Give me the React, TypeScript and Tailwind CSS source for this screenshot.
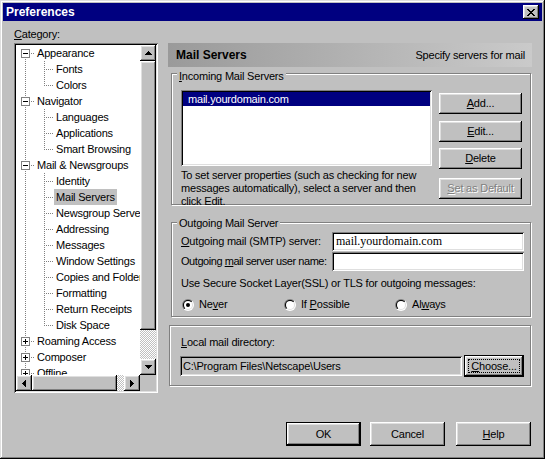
import React from "react";

const FONT = "font-['Liberation_Sans',Arial,sans-serif]";
const raised =
  "shadow-[inset_-1px_-1px_#000,inset_1px_1px_#fff,inset_-2px_-2px_#808080,inset_2px_2px_#dfdfdf]";
const sunken =
  "shadow-[inset_1px_1px_#808080,inset_-1px_-1px_#fff,inset_2px_2px_#000,inset_-2px_-2px_#dfdfdf]";
const frame =
  "shadow-[inset_-1px_-1px_#000,inset_1px_1px_#dfdfdf,inset_-2px_-2px_#808080,inset_2px_2px_#fff]";
const etched = "border border-[#808080] shadow-[inset_1px_1px_#fff,1px_1px_#fff]";
const checker =
  "bg-[image:repeating-conic-gradient(#c0c0c0_0_25%,#fff_0_50%)] bg-[length:2px_2px]";

function U({ children }: { children: React.ReactNode }) {
  return <u className="underline decoration-1 underline-offset-1">{children}</u>;
}

function Arrow({ dir }: { dir: "up" | "down" | "left" | "right" }) {
  const rows = [1, 3, 5, 7];
  if (dir === "up" || dir === "down") {
    return (
      <svg width="7" height="4" viewBox="0 0 7 4" shapeRendering="crispEdges">
        {rows.map((w, i) => (
          <rect key={i} x={(7 - w) / 2} y={dir === "up" ? i : 3 - i} width={w} height={1} fill="#000" />
        ))}
      </svg>
    );
  }
  return (
    <svg width="4" height="7" viewBox="0 0 4 7" shapeRendering="crispEdges">
      {rows.map((h, i) => (
        <rect key={i} y={(7 - h) / 2} x={dir === "left" ? i : 3 - i} height={h} width={1} fill="#000" />
      ))}
    </svg>
  );
}

function ScrollBtn({ dir }: { dir: "up" | "down" | "left" | "right" }) {
  return (
    <div className={`w-[16px] h-[16px] shrink-0 bg-[#c0c0c0] ${raised} flex items-center justify-center`}>
      <Arrow dir={dir} />
    </div>
  );
}

function CloseGlyph() {
  const px: [number, number][] = [];
  const pat = ["XX....XX", ".XX..XX.", "..XXXX..", "...XX...", "..XXXX..", ".XX..XX.", "XX....XX"];
  pat.forEach((r, y) => r.split("").forEach((c, x) => c === "X" && px.push([x, y])));
  return (
    <svg width="8" height="7" viewBox="0 0 8 7" shapeRendering="crispEdges">
      {px.map(([x, y], i) => (
        <rect key={i} x={x} y={y} width={1} height={1} fill="#000" />
      ))}
    </svg>
  );
}

function dotsV(x: number, y0: number, y1: number, k: string) {
  const out = [];
  for (let y = y0; y <= y1; y += 2) out.push(<rect key={k + y} x={x} y={y} width={1} height={1} fill="#808080" />);
  return out;
}
function dotsH(y: number, x0: number, x1: number, k: string) {
  const out = [];
  for (let x = x0; x <= x1; x += 2) out.push(<rect key={k + x} x={x} y={y} width={1} height={1} fill="#808080" />);
  return out;
}

type Row = { t: string; lvl: 0 | 1; exp?: "-" | "+"; last?: boolean; sel?: boolean; first?: boolean };

const rows: Row[] = [
  { t: "Appearance", lvl: 0, exp: "-", first: true },
  { t: "Fonts", lvl: 1 },
  { t: "Colors", lvl: 1, last: true },
  { t: "Navigator", lvl: 0, exp: "-" },
  { t: "Languages", lvl: 1 },
  { t: "Applications", lvl: 1 },
  { t: "Smart Browsing", lvl: 1, last: true },
  { t: "Mail & Newsgroups", lvl: 0, exp: "-" },
  { t: "Identity", lvl: 1 },
  { t: "Mail Servers", lvl: 1, sel: true },
  { t: "Newsgroup Servers", lvl: 1 },
  { t: "Addressing", lvl: 1 },
  { t: "Messages", lvl: 1 },
  { t: "Window Settings", lvl: 1 },
  { t: "Copies and Folders", lvl: 1 },
  { t: "Formatting", lvl: 1 },
  { t: "Return Receipts", lvl: 1 },
  { t: "Disk Space", lvl: 1, last: true },
  { t: "Roaming Access", lvl: 0, exp: "+" },
  { t: "Composer", lvl: 0, exp: "+" },
  { t: "Offline", lvl: 0, exp: "+" },
  { t: "Advanced", lvl: 0, exp: "+" },
];

function TreeLines({ r }: { r: Row }) {
  if (r.lvl === 0) {
    return (
      <svg width="19" height="16" viewBox="0 0 19 16" shapeRendering="crispEdges" className="shrink-0">
        {dotsV(9, r.first ? 14 : 0, 15, "v")}
        {dotsH(8, 15, 18, "h")}
        <rect x={5.5} y={4.5} width={8} height={8} fill="#fff" stroke="#808080" strokeWidth={1} />
        <rect x={7} y={8} width={5} height={1} fill="#000" />
        {r.exp === "+" && <rect x={9} y={6} width={1} height={5} fill="#000" />}
      </svg>
    );
  }
  return (
    <svg width="38" height="16" viewBox="0 0 38 16" shapeRendering="crispEdges" className="shrink-0">
      {dotsV(9, 0, 15, "a")}
      {dotsV(28, 0, r.last ? 8 : 15, "b")}
      {dotsH(8, 30, 37, "c")}
    </svg>
  );
}

function Tree() {
  return (
    <div className={`h-[350px] ${sunken} p-[2px] flex flex-col bg-white`}>
      <div className="flex h-[330px]">
        <div className="w-[124px] overflow-hidden bg-white">
          {rows.map((r, i) => (
            <div key={i} className="flex h-[16px] items-stretch whitespace-nowrap">
              <TreeLines r={r} />
              <span className={`px-[2px] leading-[16px] ${r.sel ? "bg-[#c0c0c0]" : ""}`}>{r.t}</span>
            </div>
          ))}
        </div>
        <div className="w-[16px] flex flex-col">
          <ScrollBtn dir="up" />
          <div className={`h-[269px] bg-[#c0c0c0] ${raised}`} />
          <div className={`flex-1 ${checker}`} />
          <ScrollBtn dir="down" />
        </div>
      </div>
      <div className="flex h-[16px]">
        <ScrollBtn dir="left" />
        <div className={`w-[85px] bg-[#c0c0c0] ${raised}`} />
        <div className={`flex-1 ${checker}`} />
        <ScrollBtn dir="right" />
        <div className="w-[16px] bg-[#c0c0c0]" />
      </div>
    </div>
  );
}

function Btn({
  children,
  className = "",
  def,
  disabled,
  focus,
}: {
  children: React.ReactNode;
  className?: string;
  def?: boolean;
  disabled?: boolean;
  focus?: boolean;
}) {
  const inner = (
    <div className={`w-full h-full bg-[#c0c0c0] ${raised} flex items-center justify-center p-[4px]`}>
      <div
        className={`w-full h-full flex items-center justify-center whitespace-nowrap ${
          focus ? "outline outline-1 outline-dotted outline-black" : ""
        } ${disabled ? "text-[#808080] [text-shadow:1px_1px_0_#fff]" : ""}`}
      >
        <span>{children}</span>
      </div>
    </div>
  );
  if (def) return <div className={`border border-black ${className}`}>{inner}</div>;
  return <div className={className}>{inner}</div>;
}

function Radio({ checked }: { checked?: boolean }) {
  return (
    <svg width="12" height="12" viewBox="0 0 12 12" className="shrink-0">
      <defs>
        <linearGradient id="ro" x1="0" y1="0" x2="1" y2="1">
          <stop offset="0.5" stopColor="#808080" />
          <stop offset="0.5" stopColor="#ffffff" />
        </linearGradient>
        <linearGradient id="ri" x1="0" y1="0" x2="1" y2="1">
          <stop offset="0.5" stopColor="#000000" />
          <stop offset="0.5" stopColor="#dfdfdf" />
        </linearGradient>
      </defs>
      <circle cx="6" cy="6" r="6" fill="url(#ro)" />
      <circle cx="6" cy="6" r="5" fill="url(#ri)" />
      <circle cx="6" cy="6" r="4" fill="#fff" />
      {checked && <circle cx="6" cy="6" r="2" fill="#000" />}
    </svg>
  );
}

export default function App() {
  return (
    <div
      className={`w-[545px] h-[459px] bg-[#c0c0c0] p-[3px] flex flex-col ${frame} ${FONT} text-[11px] leading-[13px] tracking-[-0.2px] text-black select-none`}
    >
      {/* Title bar */}
      <div className="h-[18px] shrink-0 bg-[#000080] flex items-center justify-between pl-[3px] pr-[3px]">
        <span className="text-white font-bold text-[12px] leading-[18px] tracking-normal">Preferences</span>
        <div className={`w-[16px] h-[14px] bg-[#c0c0c0] ${raised} flex items-center justify-center`}>
          <CloseGlyph />
        </div>
      </div>

      {/* Body */}
      <div className="flex h-[372px] shrink-0 pl-[11px]">
        <div className="w-[144px] flex flex-col">
          <div className="mt-[7px] h-[13px]">
            <U>C</U>ategory:
          </div>
          <div className="mt-[2px]">
            <Tree />
          </div>
        </div>

        <div className="ml-[10px] w-[364px] flex flex-col">
          {/* Header */}
          <div className="mt-[22px] h-[24px] bg-[linear-gradient(to_right,#9a9a9a,#cacaca)] flex items-center justify-between pl-[8px] pr-[7px]">
            <span className="font-bold text-[12px] tracking-normal">Mail Servers</span>
            <span>Specify servers for mail</span>
          </div>

          {/* Incoming */}
          <div className={`mt-[6px] ml-[3px] w-[360px] h-[132px] ${etched} flex flex-col`}>
            <div className="-mt-[4px] ml-[5px] px-[2px] self-start bg-[#c0c0c0] h-[13px]">
              <U>I</U>ncoming Mail Servers
            </div>
            <div className="flex mt-[7px] ml-[9px]">
              <div className="w-[251px] flex flex-col">
                <div className={`h-[76px] bg-white ${sunken} p-[2px]`}>
                  <div className="h-[14px] bg-[#000080] text-white pl-[5px] leading-[14px]">mail.yourdomain.com</div>
                </div>
                <div className="mt-[3px] whitespace-nowrap">
                  To set server properties (such as checking for new
                  <br />
                  messages automatically), select a server and then
                  <br />
                  click Edit.
                </div>
              </div>
              <div className="ml-[7px] w-[83px] flex flex-col mt-[3px]">
                <Btn className="h-[21px]">
                  <U>A</U>dd...
                </Btn>
                <Btn className="h-[21px] mt-[7px]">
                  <U>E</U>dit...
                </Btn>
                <Btn className="h-[21px] mt-[6px]">
                  <U>D</U>elete
                </Btn>
                <Btn className="h-[21px] mt-[9px]" disabled>
                  <U>S</U>et as Default
                </Btn>
              </div>
            </div>
          </div>

          {/* Outgoing */}
          <div className={`mt-[17px] ml-[3px] w-[360px] h-[95px] ${etched} flex flex-col pl-[9px] pr-[6px]`}>
            <div className="-mt-[6px] -ml-[4px] px-[2px] self-start bg-[#c0c0c0] h-[13px]">Outgoing Mail Server</div>
            <div className="flex items-center h-[19px] mt-[2px]">
              <span className="w-[151px] shrink-0 whitespace-nowrap">
                <U>O</U>utgoing mail (SMTP) server:
              </span>
              <div
                className={`ml-auto shrink-0 w-[192px] h-[19px] bg-white ${sunken} pl-[4px] flex items-center font-['Liberation_Serif','Times_New_Roman',serif] text-[12px] tracking-normal`}
              >
                mail.yourdomain.com
              </div>
            </div>
            <div className="flex items-center h-[19px] mt-[1px]">
              <span className="w-[151px] shrink-0 whitespace-nowrap tracking-[-0.45px]">
                Outgoing <U>m</U>ail server user name:
              </span>
              <div className={`ml-auto shrink-0 w-[192px] h-[19px] bg-white ${sunken}`} />
            </div>
            <div className="mt-[6px] h-[13px] whitespace-nowrap">
              Use Secure Socket Layer(SSL) or TLS for outgoing messages:
            </div>
            <div className="mt-[8px] h-[13px] flex items-center">
              <div className="ml-[1px] w-[102px] flex items-center gap-[5px]">
                <Radio checked />
                <span>
                  Ne<U>v</U>er
                </span>
              </div>
              <div className="w-[111px] flex items-center gap-[5px]">
                <Radio />
                <span>
                  If <U>P</U>ossible
                </span>
              </div>
              <div className="flex items-center gap-[5px]">
                <Radio />
                <span>
                  Al<U>w</U>ays
                </span>
              </div>
            </div>
          </div>

          {/* Local mail directory */}
          <div className={`mt-[8px] ml-[1px] w-[362px] h-[61px] ${etched} flex flex-col`}>
            <div className="mt-[10px] ml-[11px] h-[13px]">
              <U>L</U>ocal mail directory:
            </div>
            <div className="mt-[6px] ml-[10px] h-[22px] flex items-center">
              <div className={`w-[282px] h-[20px] bg-[#c0c0c0] ${sunken} pl-[3px] flex items-center`}>
                C:\Program Files\Netscape\Users
              </div>
              <Btn className="ml-[2px] w-[60px] h-[22px]" def focus>
                <U>C</U>hoose...
              </Btn>
            </div>
          </div>
        </div>
      </div>

      {/* Bottom buttons */}
      <div className="flex justify-end pr-[11px] mt-[29px]">
        <Btn className="w-[75px] h-[24px]" def>
          OK
        </Btn>
        <Btn className="w-[75px] h-[24px] ml-[9px]">Cancel</Btn>
        <Btn className="w-[75px] h-[24px] ml-[11px]">
          <U>H</U>elp
        </Btn>
      </div>
    </div>
  );
}
